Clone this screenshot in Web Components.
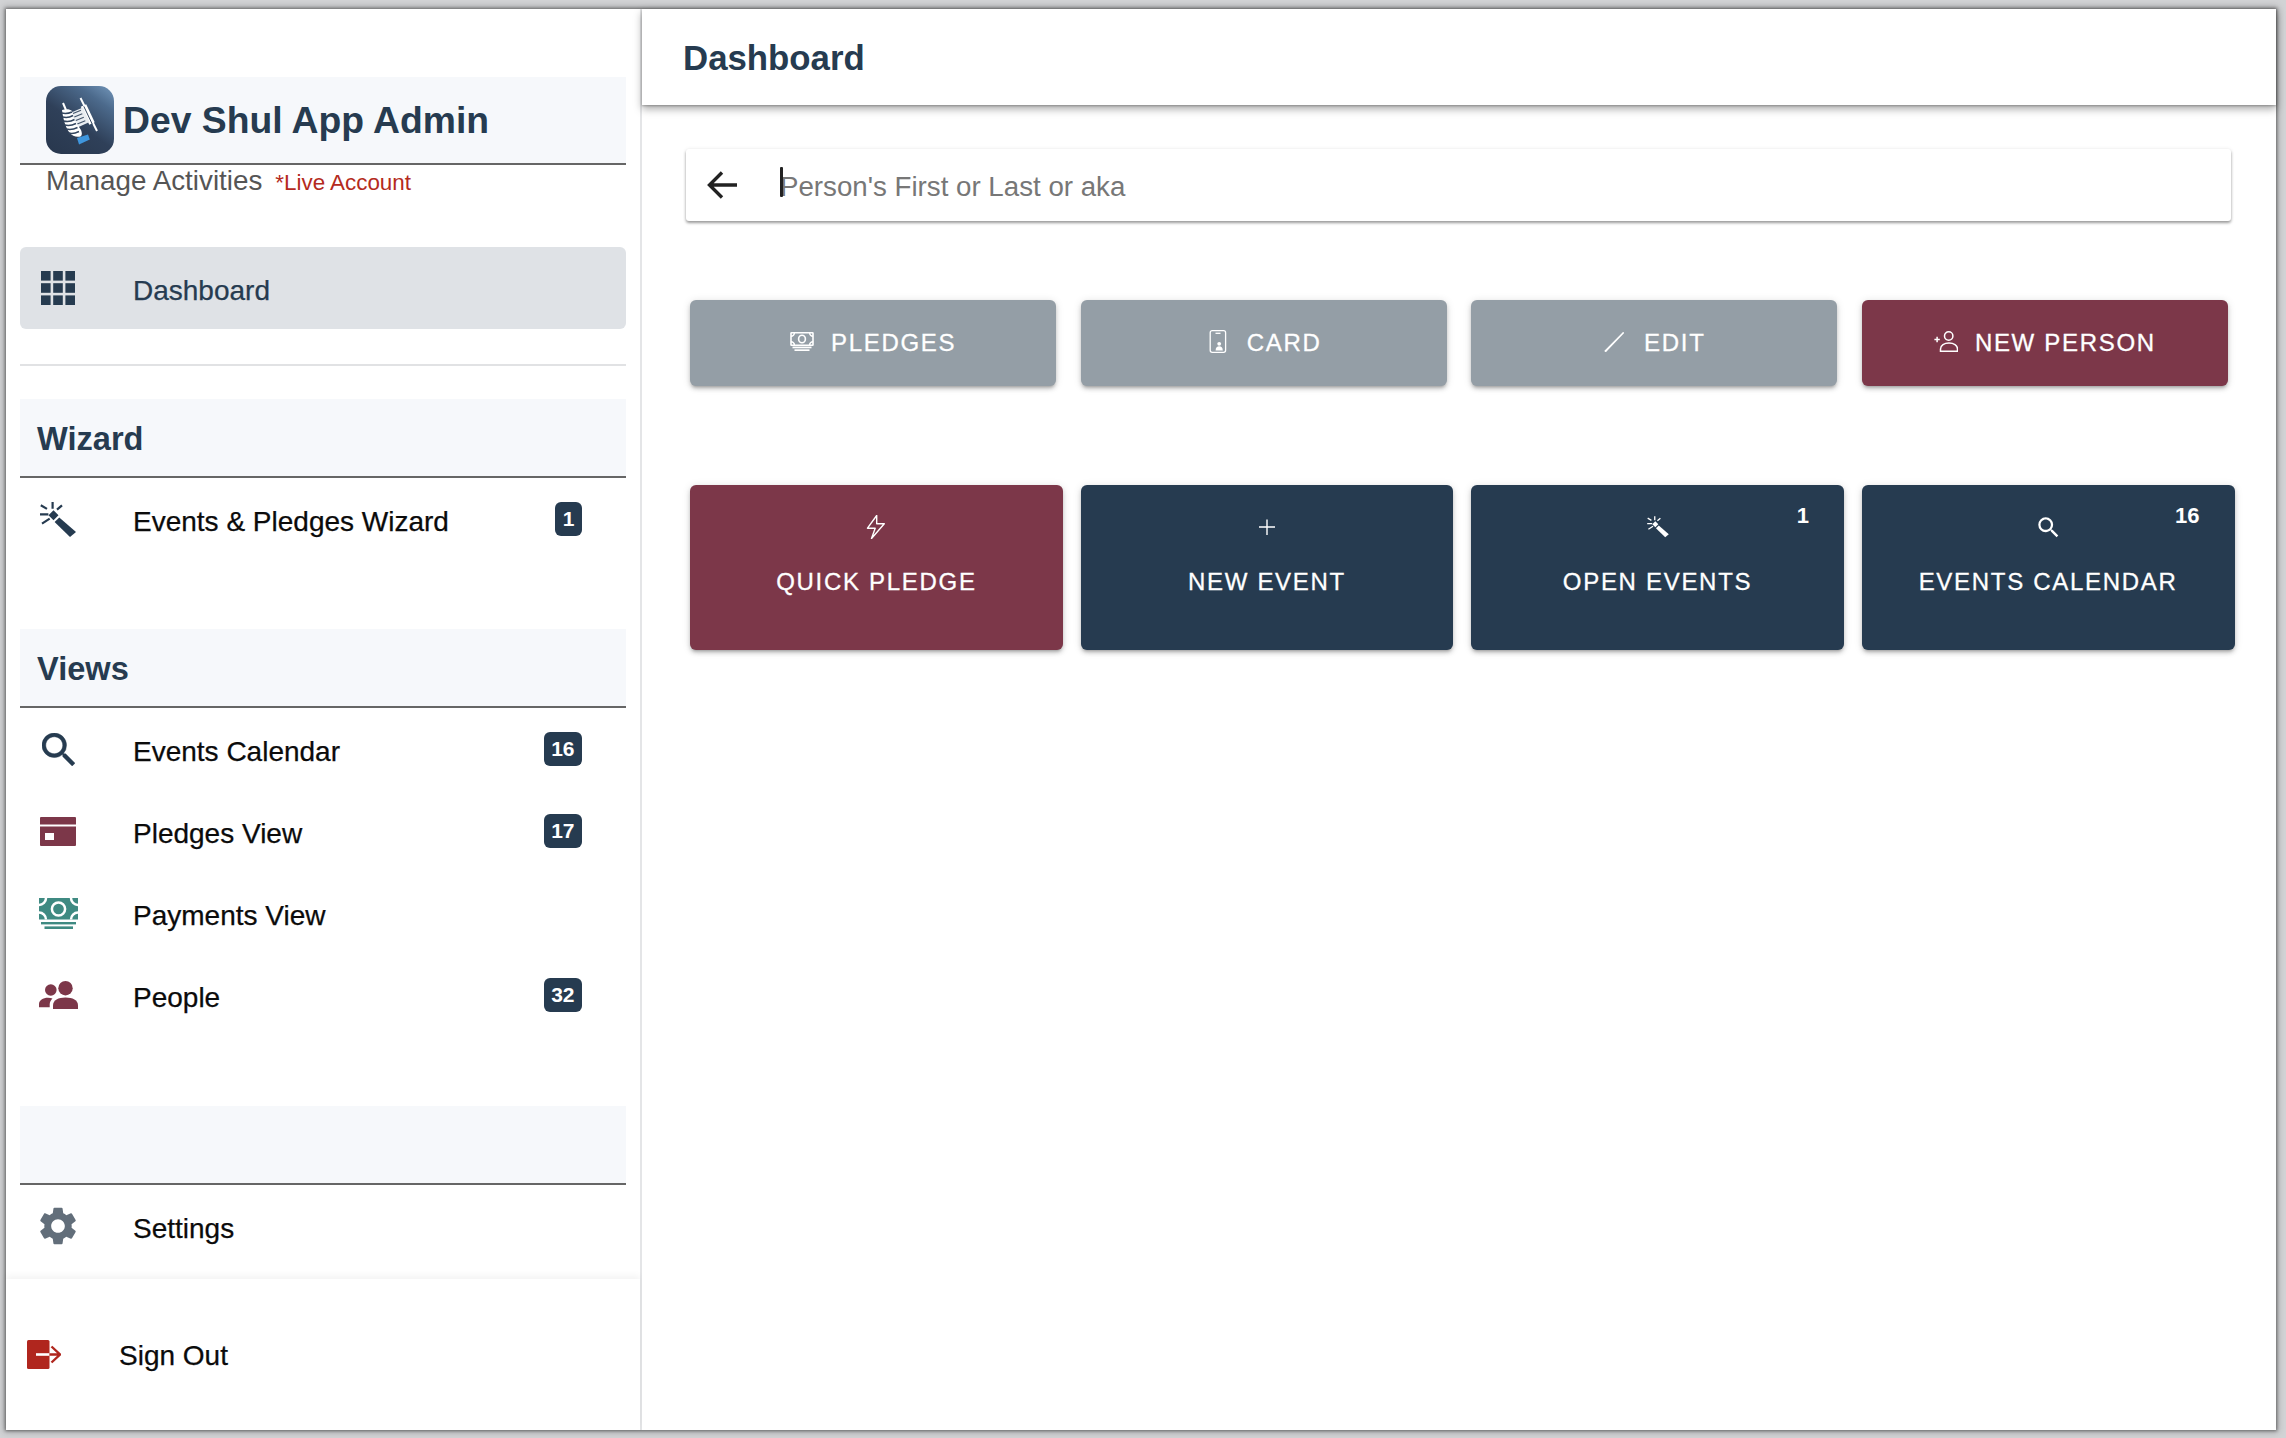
<!DOCTYPE html>
<html lang="en">
<head>
<meta charset="utf-8">
<title>Dev Shul App Admin</title>
<style>
  html, body { margin: 0; padding: 0; height: 1438px; overflow: hidden; background: #d2d3d5; font-family: "Liberation Sans", Arial, sans-serif; }
</style>
</head>
<body>
<shul-app>
  <app-sidebar slot="sidebar">
    <brand-header>Dev Shul App Admin
      <span slot="sub">Manage Activities</span>
      <span slot="note">*Live Account</span>
    </brand-header>
    <nav-item active><ui-icon slot="icon" name="grid"></ui-icon>Dashboard</nav-item>
    <side-divider></side-divider>
    <section-head>Wizard</section-head>
    <nav-item><ui-icon slot="icon" name="wand"></ui-icon>Events &amp; Pledges Wizard<count-badge slot="badge">1</count-badge></nav-item>
    <section-head style="margin-top:69px">Views</section-head>
    <nav-item><ui-icon slot="icon" name="search"></ui-icon>Events Calendar<count-badge slot="badge">16</count-badge></nav-item>
    <nav-item><ui-icon slot="icon" name="card"></ui-icon>Pledges View<count-badge slot="badge">17</count-badge></nav-item>
    <nav-item><ui-icon slot="icon" name="cash"></ui-icon>Payments View</nav-item>
    <nav-item><ui-icon slot="icon" name="people"></ui-icon>People<count-badge slot="badge">32</count-badge></nav-item>
    <section-head style="margin-top:70px"></section-head>
    <nav-item><ui-icon slot="icon" name="gear"></ui-icon>Settings</nav-item>
    <sign-out slot="footer"><ui-icon slot="icon" name="signout"></ui-icon>Sign Out</sign-out>
  </app-sidebar>
  <app-main slot="main">
    <app-bar>Dashboard</app-bar>
    <search-bar>Person's First or Last or aka</search-bar>
    <action-row>
      <action-button color="grey"><ui-icon slot="icon" name="cashline"></ui-icon>PLEDGES</action-button>
      <action-button color="grey"><ui-icon slot="icon" name="phone"></ui-icon>CARD</action-button>
      <action-button color="grey"><ui-icon slot="icon" name="pencil"></ui-icon>EDIT</action-button>
      <action-button color="maroon"><ui-icon slot="icon" name="personplus"></ui-icon>NEW PERSON</action-button>
    </action-row>
    <tile-row>
      <tile-button color="maroon"><ui-icon slot="icon" name="bolt"></ui-icon>QUICK PLEDGE</tile-button>
      <tile-button color="navy"><ui-icon slot="icon" name="plus"></ui-icon>NEW EVENT</tile-button>
      <tile-button color="navy"><ui-icon slot="icon" name="wandsmall"></ui-icon>OPEN EVENTS<span slot="count">1</span></tile-button>
      <tile-button color="navy"><ui-icon slot="icon" name="searchsmall"></ui-icon>EVENTS CALENDAR<span slot="count">16</span></tile-button>
    </tile-row>
  </app-main>
</shul-app>

<script>
const NAVY = '#263b50', MAROON = '#7c3749', GREY = '#949ea6', TEAL = '#3f8a82';

function define(name, css, html, setup) {
  customElements.define(name, class extends HTMLElement {
    constructor() {
      super();
      const root = this.attachShadow({ mode: 'open' });
      root.innerHTML = '<style>' + css + '</style>' + html;
    }
    connectedCallback() { if (setup) setup(this); }
  });
}

const wandShape = fill => `
  <g stroke="${fill}" stroke-width="2.2" stroke-linecap="butt" fill="none">
    <path d="M12.6 0v6.7M22 3.3l-5 4.4M.8 3.3L7 6.9M0 12.3h8.4M2 21.7l7.7-5"/>
  </g>
  <path fill="${fill}" d="M13.5 8.3l5 5-5 5-5-5z"/>
  <path fill="${fill}" d="M19.3 15.5L36 30l-6 5-15.4-15z"/>`;

const GEAR = 'M19.14 12.94c.04-.3.06-.61.06-.94 0-.32-.02-.64-.07-.94l2.03-1.58a.49.49 0 0 0 .12-.61l-1.92-3.32a.488.488 0 0 0-.59-.22l-2.39.96c-.5-.38-1.03-.7-1.62-.94l-.36-2.54a.484.484 0 0 0-.48-.41h-3.84c-.24 0-.43.17-.47.41l-.36 2.54c-.59.24-1.13.57-1.62.94l-2.39-.96c-.22-.08-.47 0-.59.22L2.74 8.87c-.12.21-.08.47.12.61l2.03 1.58c-.05.3-.09.63-.09.94s.02.64.07.94l-2.03 1.58a.49.49 0 0 0-.12.61l1.92 3.32c.12.22.37.29.59.22l2.39-.96c.5.38 1.03.7 1.62.94l.36 2.54c.05.24.24.41.48.41h3.84c.24 0 .44-.17.47-.41l.36-2.54c.59-.24 1.13-.56 1.62-.94l2.39.96c.22.08.47 0 .59-.22l1.92-3.32c.12-.22.07-.47-.12-.61l-2.01-1.58zM12 15.6c-1.98 0-3.6-1.62-3.6-3.6s1.62-3.6 3.6-3.6 3.6 1.62 3.6 3.6-1.62 3.6-3.6 3.6z';
const SEARCH = 'M15.5 14h-.79l-.28-.27A6.471 6.471 0 0 0 16 9.5 6.5 6.5 0 1 0 9.5 16c1.61 0 3.09-.59 4.23-1.57l.27.28v.79l5 4.99L20.49 19l-4.99-5zm-6 0C7.01 14 5 11.99 5 9.5S7.01 5 9.5 5 14 7.01 14 9.5 11.99 14 9.5 14z';

const ICONS = {
  grid: [34, 34, '0 0 34 34', `<g fill="${NAVY}">` +
    [0, 12.2, 24.4].map(y => [0, 12.2, 24.4].map(x => `<rect x="${x}" y="${y}" width="9.6" height="9.6"/>`).join('')).join('') + '</g>'],
  wand: [36, 35, '0 0 36 35', wandShape(NAVY)],
  search: [33, 33, '3 3 17.5 17.5', `<path fill="${NAVY}" d="${SEARCH}" stroke="${NAVY}" stroke-width=".25"/>`],
  card: [36, 29, '0 0 36 29', `<path fill="${MAROON}" fill-rule="evenodd" d="M1 0h34a1 1 0 0 1 1 1v6.5H0V1a1 1 0 0 1 1-1zM0 9.5h36V28a1 1 0 0 1-1 1H1a1 1 0 0 1-1-1zM5 16v7h9v-7z"/>`],
  cash: [39, 31, '0 0 39 31', `<rect width="39" height="21.5" fill="${TEAL}"/>
    <circle cx="19.5" cy="11" r="6.6" fill="none" stroke="#fff" stroke-width="2.5"/>
    <path d="M0 7A7 7 0 0 0 7 0M39 7A7 7 0 0 1 32 0M0 14.500A7 7 0 0 1 7 21.5M39 14.500A7 7 0 0 0 32 21.5" fill="none" stroke="#fff" stroke-width="2.5"/>
    <rect x="2" y="24" width="35" height="2.4" fill="${TEAL}"/><rect x="5.5" y="28.400" width="28.500" height="2.6" fill="${TEAL}"/>`],
  people: [39, 28, '0 0 39 28', `<g fill="${MAROON}"><circle cx="26.5" cy="7.2" r="7.2"/><circle cx="11.8" cy="9" r="5.8"/>
    <path d="M14 28v-3.8c0-5 5.4-7.7 12.5-7.7S39 19.2 39 24.2V28z"/>
    <path d="M0 26.3v-3.3c0-3.7 4-6.3 9-6.3 1.7 0 3.2.3 4.5.8-1.6 1.5-2.8 3.5-2.8 6v2.8z"/></g>`],
  gear: [36, 38, '2.6 2 18.8 20', `<path fill="#626e7a" d="${GEAR}"/>`],
  signout: [34, 29, '0 0 34 29', `<rect width="22.5" height="29" rx="1.5" fill="#b0261e"/>
    <path d="M9 14.5h13.5" stroke="#fff" stroke-width="2.6"/>
    <path d="M22.5 14.5H32M24.5 6.5l8.5 8-8.5 8" fill="none" stroke="#b0261e" stroke-width="2.4"/>`],
  back: [30, 28, '0 0 30 28', `<path d="M30 14H3M15 1.5L2.5 14 15 26.5" fill="none" stroke="#222" stroke-width="3.4"/>`],
  cashline: [24, 19, '0 0 24 19', `<g fill="none" stroke="#fff" stroke-width="1.6">
    <rect x="1" y=".8" width="22" height="12.4" rx=".5"/><ellipse cx="12" cy="7" rx="3.4" ry="3.8"/>
    <path d="M1 4.200A3.400 3.400 0 0 0 4.400 .8M23 4.200A3.400 3.400 0 0 1 19.600 .8M1 9.800A3.400 3.400 0 0 1 4.400 13.200M23 9.800A3.400 3.400 0 0 0 19.600 13.200"/></g>
    <rect x="2.5" y="14.600" width="19" height="1.7" fill="#fff"/><rect x="4.500" y="17.300" width="15" height="1.700" fill="#fff"/>`],
  phone: [24, 23, '0 0 24 23', `<rect x="4.2" y=".7" width="15.4" height="21.6" rx="2" fill="none" stroke="#fff" stroke-width="1.3"/>
    <path d="M9.5 3.3h5" stroke="#fff" stroke-width="1.3"/>
    <circle cx="13.2" cy="13.8" r="1.9" fill="#fff"/><path d="M9.6 20.5c0-2.9 1.6-4.2 3.6-4.2s3.6 1.3 3.6 4.2z" fill="#fff"/>`],
  pencil: [24, 20, '0 0 24 20', `<path fill="#fff" d="M2.8 20.300l-1.600-1.300L19.500.4c.5-.5 1.500-.4 1.500.5 0 .3-.1.5-.3.7z"/>`],
  personplus: [24, 21, '0 0 24 21', `<g fill="none" stroke="#fff" stroke-width="1.5"><circle cx="14.700" cy="5" r="4.200"/>
    <path d="M6.500 20.200h17v-2.300c0-3.600-3.800-5.900-8.500-5.900s-8.500 2.300-8.500 5.900z"/><path d="M.4 8.500h5.400M3.100 5.800v5.400"/></g>`],
  bolt: [24, 24, '0 0 24 24', `<path transform="translate(3.5 .5)" d="M9.2 0L0 12.700h7.700L4 23 16.800 8.300H9.200z" fill="none" stroke="#fff" stroke-width="1.4" stroke-linejoin="round"/>`],
  plus: [24, 24, '0 0 24 24', `<path d="M4 12h16M12 4.500v15.500" stroke="#fff" stroke-width="1.4" fill="none"/>`],
  wandsmall: [24, 24, '-2 -2 40 40', wandShape('#fff')],
  searchsmall: [24, 24, '1 1 21 21', `<path fill="#fff" d="${SEARCH}"/>`]
};

define('ui-icon', `:host{display:inline-flex;align-items:center;justify-content:center;line-height:0} svg{display:block}`, '', el => {
  const spec = ICONS[el.getAttribute('name')];
  if (spec && !el.shadowRoot.querySelector('svg')) {
    el.shadowRoot.innerHTML +=
      `<svg xmlns="http://www.w3.org/2000/svg" width="${spec[0]}" height="${spec[1]}" viewBox="${spec[2]}" aria-hidden="true">${spec[3]}</svg>`;
  }
});

define('shul-app',
  `:host{display:flex;box-sizing:border-box;width:2270px;height:1421px;margin:9px 0 0 6px;background:#fff;
     box-shadow:0 0 3px 1px rgba(0,0,0,.42),0 0 7px 2px rgba(0,0,0,.22)}`,
  `<slot name="sidebar"></slot><slot name="main"></slot>`);

define('app-sidebar',
  `:host{display:flex;flex-direction:column;box-sizing:border-box;width:636px;flex:none;height:100%;border-right:2px solid #e4e5e7;background:#fff}
   .scroll{flex:1;min-height:0;padding:68px 14px 0;display:flex;flex-direction:column}
   .foot{flex:none;box-shadow:0 -3px 7px rgba(0,0,0,.05)}`,
  `<div class="scroll"><slot></slot></div><div class="foot"><slot name="footer"></slot></div>`);

define('brand-header',
  `:host{display:block;height:170px;box-sizing:border-box;flex:none}
   .top{display:flex;align-items:center;gap:9px;height:88px;box-sizing:border-box;padding:0 0 0 26px;background:#f6f8fb;border-bottom:2px solid #666;
        font:bold 37.3px/1 "Liberation Sans",Arial,sans-serif;color:${NAVY}}
   .top span{padding-top:1px}
   .logo{width:68px;height:68px;flex:none;border-radius:15px;overflow:hidden;background:linear-gradient(35deg,#28374d 0%,#2f4059 45%,#4c6a8c 78%,#7397bb 100%);line-height:0}
   .sub{display:flex;align-items:baseline;gap:13px;padding-left:26px;font-size:27.8px;color:#555}
   .note{font-size:22.4px;color:#b42a20}`,
  `<div class="top"><div class="logo">
     <svg width="68" height="68" viewBox="0 0 68 68" aria-hidden="true">
       <path d="M34.5 12L51 45" stroke="#fff" stroke-width="2" fill="none"/>
       <path d="M37.5 19.5l8.5 18" stroke="#fff" stroke-width="6" fill="none"/>
       <path d="M37.8 20.3l8.5 18" stroke="#33465f" stroke-width="1" fill="none"/>
       <path d="M24 27l13-5.500 6.500 14.500-12 5.500z" fill="#e9edf1"/>
       <path d="M27 27.500l8-3.300M28.300 31l8-3.300M29.800 34.500l8-3.300M31.300 38l8-3.300" stroke="#45566c" stroke-width="1.200"/>
       <path d="M17 17l3 7" stroke="#fff" stroke-width="2"/>
       <path d="M16 24c4-1.500 8-1 10 1l1.500 7c2 4 5 8 7.500 12 1 3 1.500 5-.5 6.500-4 1-8 0-11-4-3-3-6.500-13-7.500-22.500z" fill="#fff"/>
       <path d="M15.500 27c4 1 7.500.3 10.500-1M16.500 31c4 1 7.500.3 10.500-1.500M17.500 35c4 1 8 .3 11-1.500M18.500 39c4 1 8 .3 11.500-1.500M20 43c4 1 8 .3 11.500-1.500M22.500 47c3 1 7 .3 10.500-1.500" stroke="#33465f" stroke-width="1.500" fill="none"/>
       <path d="M31 52l11-3.500 1.800 5L33 58.500z" fill="#3f96dd"/>
     </svg></div><span><slot></slot></span></div>
   <div class="sub"><slot name="sub"></slot><span class="note"><slot name="note"></slot></span></div>`);

define('nav-item',
  `:host{display:flex;align-items:center;flex:none;height:82px;box-sizing:border-box;padding:0 44px 0 18px;border-radius:6px;
         font-size:28px;color:#0b0b0b;font-family:"Liberation Sans",Arial,sans-serif;-webkit-text-stroke:.25px currentColor}
   :host([active]){background:#dfe2e6;color:${NAVY}}
   .ic{width:40px;flex:none;display:flex;justify-content:center}
   .tx{flex:1;min-width:0;margin-left:55px;padding-top:5px;white-space:nowrap}`,
  `<span class="ic"><slot name="icon"></slot></span><span class="tx"><slot></slot></span><slot name="badge"></slot>`);

define('sign-out',
  `:host{display:flex;align-items:center;height:151px;box-sizing:border-box;padding-left:21px;font-size:28px;color:#0b0b0b;background:#fff;-webkit-text-stroke:.25px currentColor}
   .ic{width:34px;flex:none;display:flex}
   .tx{margin-left:58px;padding-top:3px}`,
  `<span class="ic"><slot name="icon"></slot></span><span class="tx"><slot></slot></span>`);

define('side-divider', `:host{display:block;flex:none;height:2px;background:#e1e2e4;margin:35px 0 33px}`, '');

define('section-head',
  `:host{display:flex;align-items:center;flex:none;box-sizing:border-box;height:79px;padding:3px 0 0 17px;background:#f6f8fb;border-bottom:2px solid #666;
         font:bold 32.6px/1 "Liberation Sans",Arial,sans-serif;color:${NAVY}}`,
  `<slot></slot>`);

define('count-badge',
  `:host{display:inline-flex;align-items:center;justify-content:center;height:34px;box-sizing:border-box;padding:0 7.5px 2px;flex:none;border-radius:6px;
         background:${NAVY};color:#fff;font:bold 21px/1 "Liberation Sans",Arial,sans-serif;-webkit-text-stroke:0}`,
  `<slot></slot>`);

define('app-main',
  `:host{display:flex;flex-direction:column;flex:1;min-width:0;background:#fff}`,
  `<slot></slot>`);

define('app-bar',
  `:host{display:flex;align-items:center;flex:none;height:96px;box-sizing:border-box;padding:2px 0 0 41px;background:#fff;
         box-shadow:0 4px 8px rgba(0,0,0,.34),0 1px 2px rgba(0,0,0,.25);
         font:bold 34.8px/1 "Liberation Sans",Arial,sans-serif;color:${NAVY};position:relative}`,
  `<slot></slot>`);

define('search-bar',
  `:host{display:flex;align-items:center;flex:none;height:72px;box-sizing:border-box;margin:44px 45px 0 44px;padding-left:21px;border-radius:3px;background:#fff;
         box-shadow:0 2px 3px rgba(0,0,0,.38),0 0 4px rgba(0,0,0,.07);font-size:27.7px;color:#777}
   .arrow{line-height:0;flex:none}
   .text{position:relative;margin-left:43px;padding-top:3px;white-space:nowrap}
   .caret{position:absolute;left:0;top:-1px;width:3px;height:30px;background:#222;border-radius:1px}`,
  `<span class="arrow"><ui-icon name="back"></ui-icon></span><span class="text"><span class="caret"></span><slot></slot></span>`);

define('action-row',
  `:host{display:grid;grid-template-columns:repeat(4,1fr);gap:24.4px;margin:79px 48px 0 48px}`,
  `<slot></slot>`);

define('tile-row',
  `:host{display:grid;grid-template-columns:repeat(4,1fr);gap:17.8px;margin:99px 41.5px 0 48px}`,
  `<slot></slot>`);

const elev = 'box-shadow:0 3px 3px -2px rgba(0,0,0,.22),0 3px 4px rgba(0,0,0,.16),0 1px 8px rgba(0,0,0,.12)';
const colors = `:host([color=grey]){background:${GREY}} :host([color=maroon]){background:${MAROON}} :host([color=navy]){background:${NAVY}}`;

define('action-button',
  `:host{display:flex;align-items:center;justify-content:center;height:86px;border-radius:6px;color:#fff;${elev};
         font:24px/1 "Liberation Sans",Arial,sans-serif;letter-spacing:1.7px;-webkit-text-stroke:.3px #fff}
   ${colors}
   .ic{display:flex;margin:0 17px 3px 0;width:24px;justify-content:center}`,
  `<span class="ic"><slot name="icon"></slot></span><slot></slot>`);

define('tile-button',
  `:host{display:flex;flex-direction:column;align-items:center;position:relative;height:165px;box-sizing:border-box;padding-top:30px;border-radius:6px;color:#fff;${elev};
         font:24px/29px "Liberation Sans",Arial,sans-serif;letter-spacing:1.7px;-webkit-text-stroke:.3px #fff}
   ${colors}
   .ic{display:flex;height:24px;margin-bottom:28px}
   .count{position:absolute;top:20px;right:35px;font:bold 22px/22px "Liberation Sans",Arial,sans-serif;letter-spacing:0;-webkit-text-stroke:0}`,
  `<span class="ic"><slot name="icon"></slot></span><span><slot></slot></span><span class="count"><slot name="count"></slot></span>`);
</script>
</body>
</html>
